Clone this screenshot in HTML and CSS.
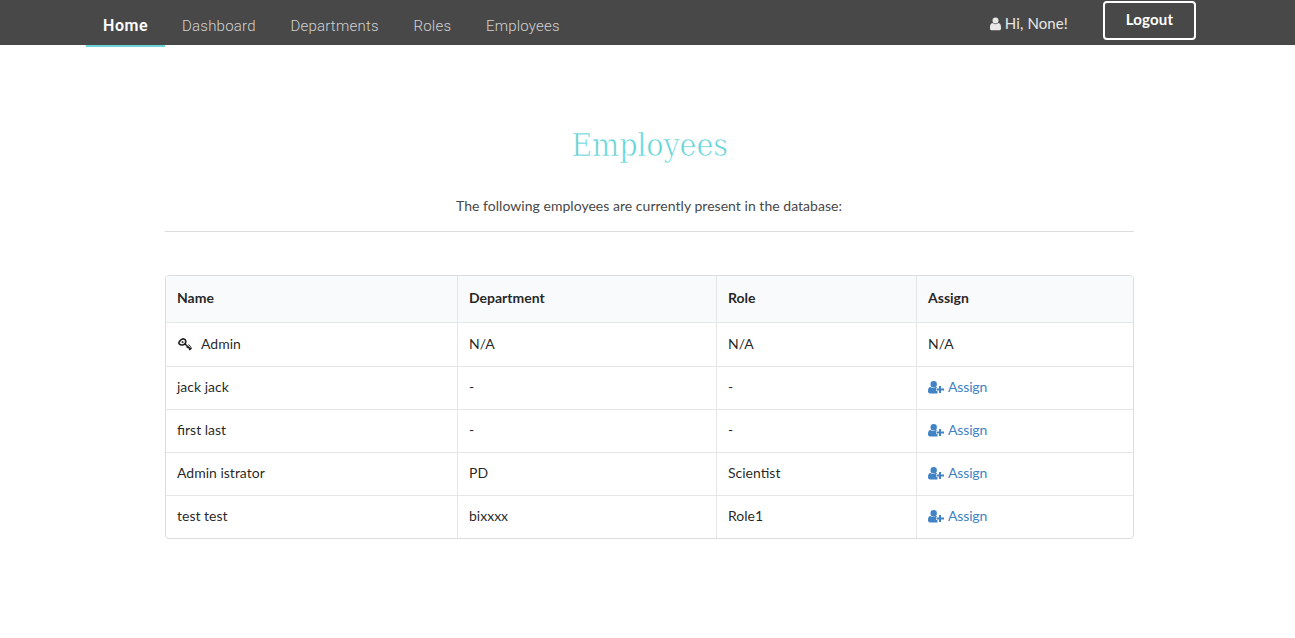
FILE: index.html
```html
<!DOCTYPE html>
<html lang="en">
<head>
<meta charset="utf-8">
<title>Employees</title>
<link rel="stylesheet" href="styles.css">
</head>
<body>
<svg class="defs" width="0" height="0">
  <symbol id="user" viewBox="0 0 11 14"><path d="M2.500 3.400a3 3 0 0 1 6 0 3 3 0 0 1-6 0zM2.600 6.100C.8 6.300 0 7.900 0 10.700V11.500C0 12.600.7 13.300 1.700 13.300h7.600c1 0 1.700-.7 1.700-1.800v-.8c0-2.800-.8-4.400-2.600-4.600-1.600 1.500-4.200 1.500-5.800 0z"/></symbol>
  <symbol id="assign" viewBox="0 0 16 13"><path d="M2.500 3.200a3.200 3.200 0 0 1 6.400 0 3.200 3.200 0 0 1-6.400 0zM2.500 5.900C.7 6 0 7.800 0 10v.3c0 1.300.8 2.200 2 2.200h7.500V10H8V7h1.300c-.3-.7-.7-1-1.400-1.100-1.500 1.300-3.900 1.300-5.400 0zM11 5h2v2.500h3v2h-3V12h-2V9.500H8.500v-2H11z"/></symbol>
</svg>
<nav class="navbar">
  <div class="menu">
    <a class="item active">Home</a>
    <a class="item">Dashboard</a>
    <a class="item">Departments</a>
    <a class="item">Roles</a>
    <a class="item">Employees</a>
  </div>
  <div class="account">
    <span class="greeting"><svg class="user"><use href="#user"/></svg>Hi, None!</span>
    <a class="logout">Logout</a>
  </div>
</nav>
<main class="content">
  <h1 class="title">Employees</h1>
  <p class="intro">The following employees are currently present in the database:</p>
  <table class="table">
    <colgroup><col class="c-name"><col class="c-dept"><col class="c-role"><col></colgroup>
    <thead><tr><th>Name</th><th>Department</th><th>Role</th><th>Assign</th></tr></thead>
    <tbody>
      <tr class="admin"><td><svg class="key" viewBox="0 0 14 13"><g fill="none" stroke="currentColor" stroke-width="1.700"><path d="M6.900 5.900C5.300 7.300 2.600 7.300 1.200 5.800 .2 4.500 2.300 1.700 4.400 1c1.200-.4 2.900.3 3.200 1.600.3 1.300.1 2.400-.7 3.300z"/><path d="M3.800 3.600l1.600 1M6.800 5.800l6 5.900M8.800 9.800l1.700-1.800M11.200 12l2.300-2.400" stroke-width="1.600"/><path d="M10.500 6.500l2 1.800-1.500 1.500" stroke-width="1"/></g></svg>Admin</td><td>N/A</td><td>N/A</td><td>N/A</td></tr>
      <tr><td>jack jack</td><td>-</td><td>-</td><td><a class="assign"><svg><use href="#assign"/></svg>Assign</a></td></tr>
      <tr><td>first last</td><td>-</td><td>-</td><td><a class="assign"><svg><use href="#assign"/></svg>Assign</a></td></tr>
      <tr><td>Admin istrator</td><td>PD</td><td>Scientist</td><td><a class="assign"><svg><use href="#assign"/></svg>Assign</a></td></tr>
      <tr><td>test test</td><td>bixxxx</td><td>Role1</td><td><a class="assign"><svg><use href="#assign"/></svg>Assign</a></td></tr>
    </tbody>
  </table>
</main>
</body>
</html>
```
FILE: styles.css
```css
* { box-sizing: border-box; }
body { margin: 0; background: #fff; color: rgba(0,0,0,.87); font: 14px/20px Lato, sans-serif; }
.defs { display: block; height: 0; }
.navbar { display: flex; justify-content: space-between; height: 45px; padding: 0 99px 0 86px; background: #484848; }
.menu { display: flex; }
.item { height: 47px; padding: 16px 17px 0; border-bottom: 2px solid transparent; color: #d2d2d2; font: 300 15px/20px Roboto, sans-serif; letter-spacing: .22px; margin-right: .7px; }
.item.active { width: 79px; margin-right: 0; color: #fff; font-size: 16px; font-weight: 600; border-color: #6ad4d7; letter-spacing: .6px; }
.account { display: flex; align-items: flex-start; }
.greeting { display: flex; margin: 13px 35px 0 0; color: #e8e8e8; font-size: 15px; line-height: 20px; letter-spacing: .1px; }
.user { width: 11px; height: 14px; margin: 4px 4px 0 0; fill: #e8e8e8; }
.logout { width: 93px; height: 39px; margin-top: 1px; border: 2px solid #fff; border-radius: 4px; color: #fff; font-size: 15px; font-weight: 700; line-height: 33px; letter-spacing: .2px; text-align: center; }
.content { width: 969px; margin: 76px 0 0 165px; }
.title { margin: 0; padding-top: 1px; color: #5fd3d6; font: 400 32px/46px "DejaVu Serif Condensed", "DejaVu Serif", serif; font-stretch: condensed; letter-spacing: -.2px; text-align: center; -webkit-text-stroke: .65px #fff; }
.intro { margin: 28px 0 43px; padding: 0 1px 15px 0; border-bottom: 1px solid #dcdddd; color: #484848; letter-spacing: .03px; text-align: center; }
.table { width: 969px; table-layout: fixed; border: 1px solid #dcdddd; border-radius: 4px; border-spacing: 0; border-collapse: separate; overflow: hidden; }
.c-name { width: 291px; }
.c-dept { width: 259px; }
.c-role { width: 200px; }
th, td { padding: 0 11px 2px; border-left: 1px solid #e5e6e6; border-top: 1px solid #e5e6e6; text-align: left; height: 43px; }
th { height: 46px; padding-bottom: 2px; border-top: 0; background: #f9fafb; }
th:first-child, td:first-child { border-left: 0; }
.admin td { height: 44px; padding-bottom: 1px; }
.key { width: 14px; height: 13px; margin: 0 9px -2px 1px; }
.assign { display: flex; align-items: center; color: #4183c4; letter-spacing: -.15px; }
.assign svg { width: 16px; height: 13px; margin-right: 4px; fill: #4183c4; }
```
